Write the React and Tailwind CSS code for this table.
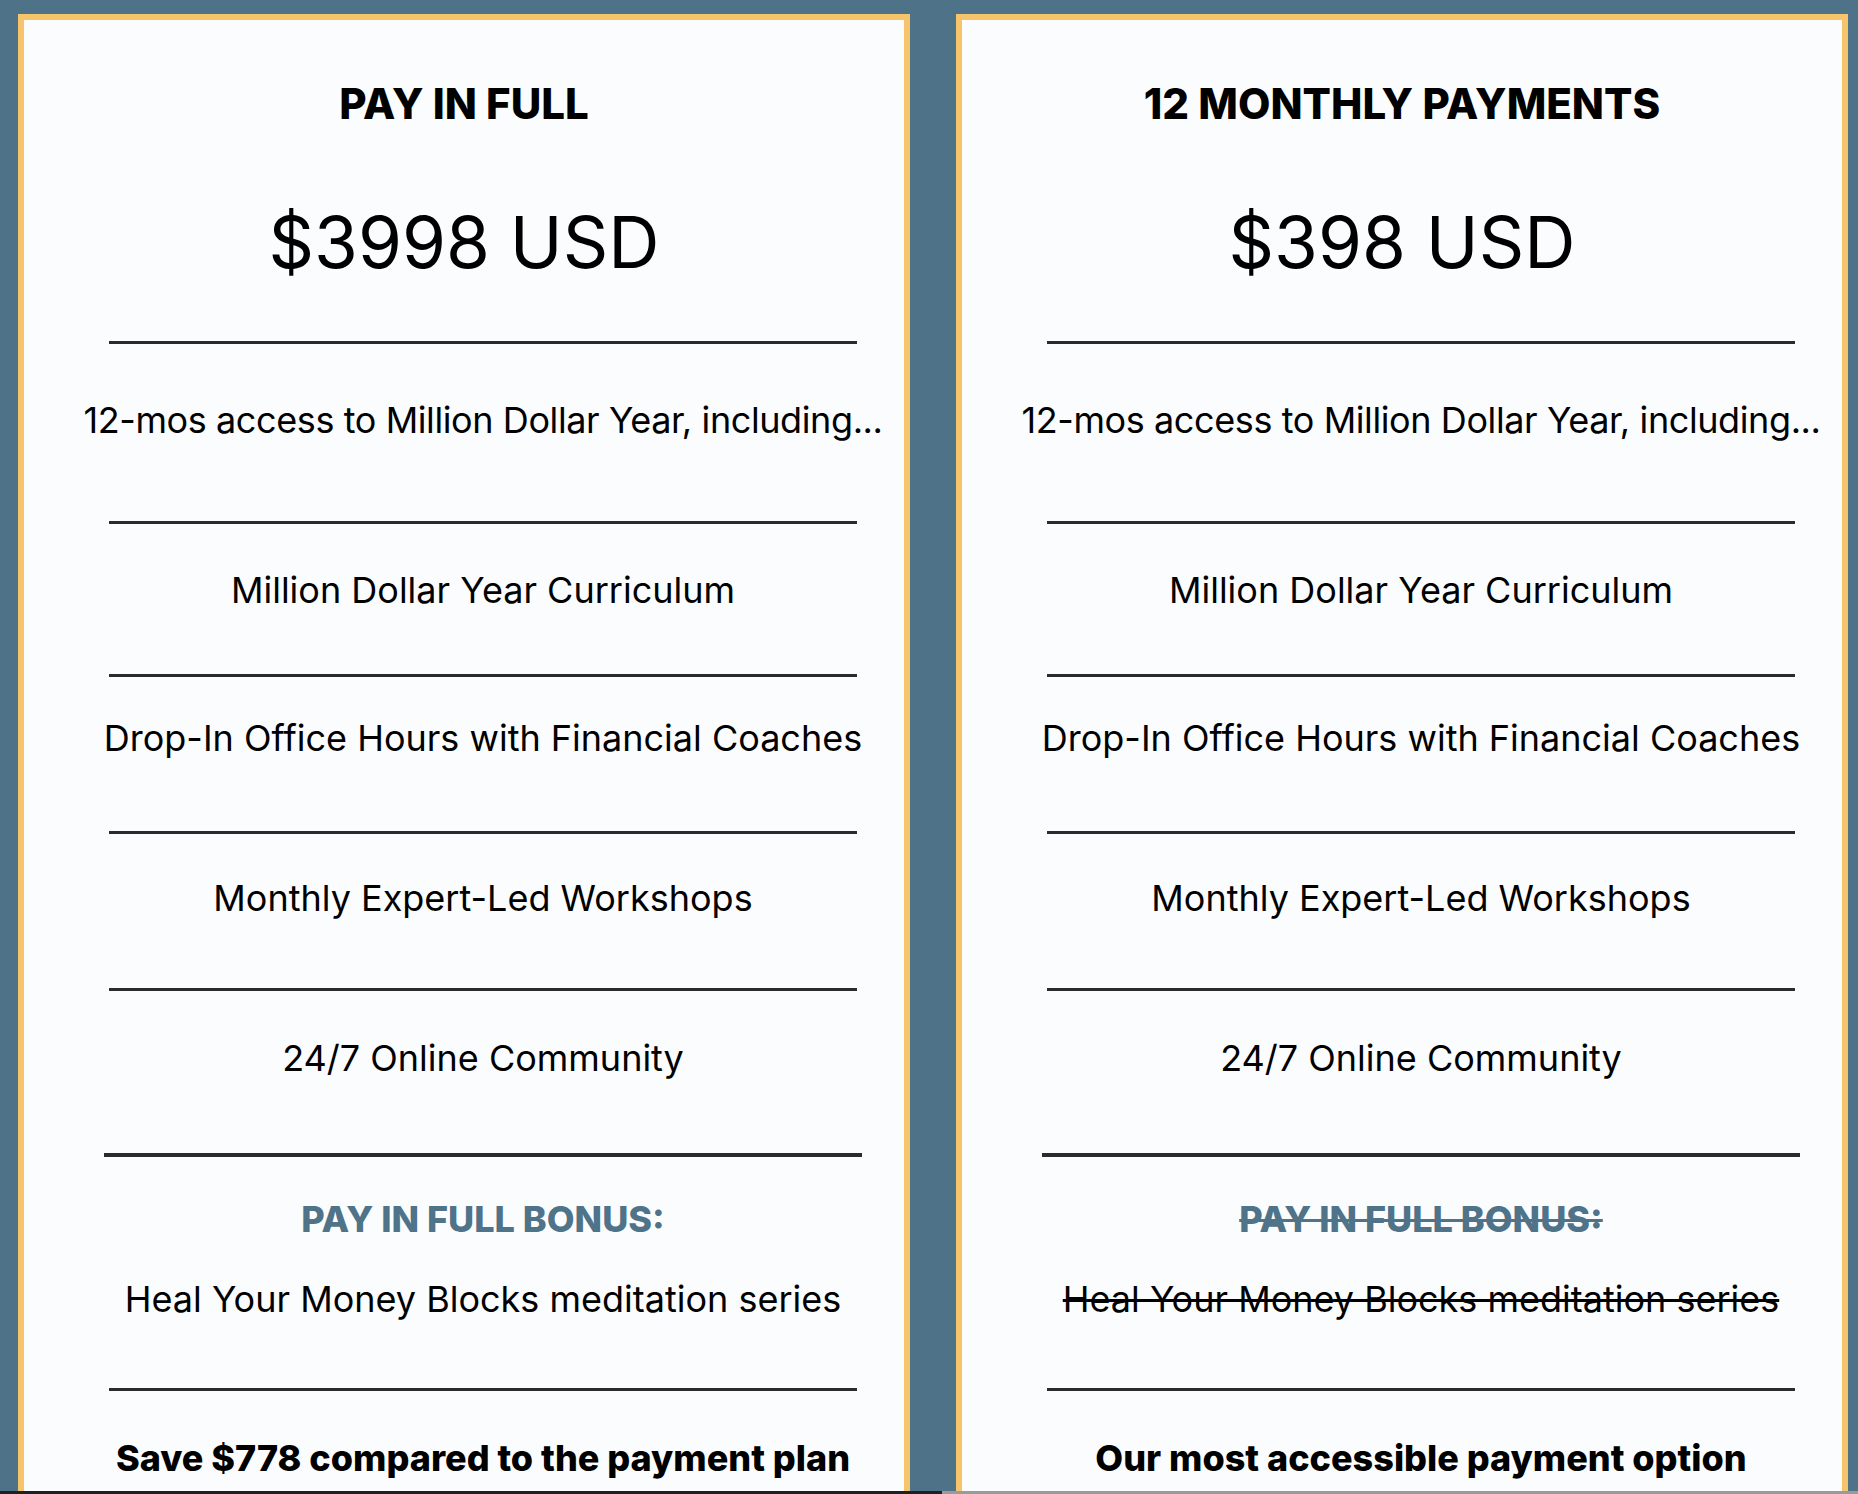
import React from 'react';

const Rule = ({ mt, thick }) => (
  <div
    className={`${mt} ${thick ? 'h-[4px] w-[758px]' : 'h-[3px] w-[748px]'} bg-[#2b2b2b]`}
  />
);

const PlanCard = ({ title, price, bonusStruck, footer }) => {
  return (
    <div className="w-[892px] shrink-0 border-[6px] border-[#f6c56b] bg-[#fbfcfe] self-start h-[1600px]">
      {/* Header */}
      <div className="flex flex-col items-center">
        <h2 className="mt-[64px] text-[42px] leading-[40px] font-extrabold text-black">{title}</h2>
        <div className="mt-[83px] text-[71px] leading-[70px] text-black">{price}</div>
      </div>

      {/* Features */}
      <div className="pl-[38px] flex flex-col items-center text-[36px] leading-[34px] text-black">
        <Rule mt="mt-[64px]" />
        <p className="mt-[59px] whitespace-nowrap tracking-[-0.4px]">
          12-mos access to Million Dollar Year, including...
        </p>
        <Rule mt="mt-[84px]" />
        <p className="mt-[49px]">Million Dollar Year Curriculum</p>
        <Rule mt="mt-[67px]" />
        <p className="mt-[44px]">Drop-In Office Hours with Financial Coaches</p>
        <Rule mt="mt-[76px]" />
        <p className="mt-[47px]">Monthly Expert-Led Workshops</p>
        <Rule mt="mt-[73px]" />
        <p className="mt-[50px]">24/7 Online Community</p>
        <Rule mt="mt-[78px]" thick />

        {/* Bonus */}
        <h3
          className={`mt-[45px] text-[36px] font-extrabold text-[#4f7389] ${
            bonusStruck ? 'line-through decoration-[3px] decoration-[#4f7389]' : ''
          }`}
        >
          PAY IN FULL BONUS:
        </h3>
        <p
          className={`mt-[46px] ${
            bonusStruck ? 'line-through decoration-[3px] decoration-black' : ''
          }`}
        >
          Heal Your Money Blocks meditation series
        </p>
        <Rule mt="mt-[72px]" />
        <p className="mt-[50px] text-[36px] font-extrabold whitespace-nowrap">{footer}</p>
      </div>
    </div>
  );
};

export default function App() {
  return (
    <div className="w-[1858px] h-[1494px] overflow-hidden flex flex-col bg-[#4e7389] font-[Inter,sans-serif]">
      <div className="flex-1 overflow-hidden flex gap-[46px] pl-[18px] pt-[14px]">
        <PlanCard
          title="PAY IN FULL"
          price="$3998 USD"
          footer="Save $778 compared to the payment plan"
        />
        <PlanCard
          title="12 MONTHLY PAYMENTS"
          price="$398 USD"
          bonusStruck
          footer="Our most accessible payment option"
        />
      </div>
      {/* window edge */}
      <div className="h-[3px] flex">
        <div className="w-[942px] bg-[#1f1f1f]" />
        <div className="flex-1 bg-[#9a9a9a]" />
      </div>
    </div>
  );
}
